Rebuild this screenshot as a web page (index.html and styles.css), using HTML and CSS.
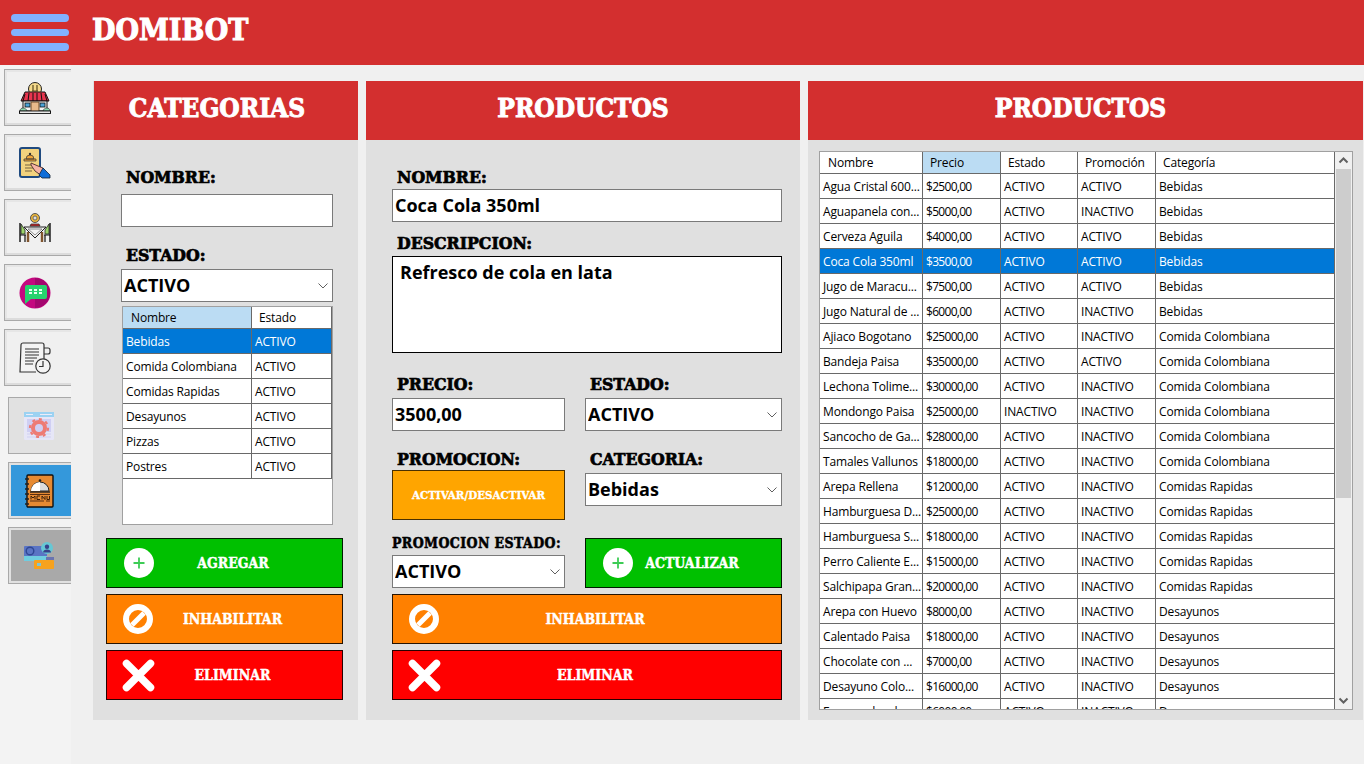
FILE: index.html
```html
<!DOCTYPE html>
<html lang="es">

<head>
    <meta charset="UTF-8">
    <meta name="viewport" content="width=device-width, initial-scale=1.0">
    <title>Domibot</title>
    <link rel="stylesheet" href="styles.css">
</head>

<body>
    <header class="topbar">
        <button class="menu-toggle" aria-label="Menu"><span></span><span></span><span></span></button>
        <div class="brand">DOMIBOT</div>
    </header>

    <div class="layout">
        <nav class="sidebar">
            <button class="nav-button">
                <svg class="nav-icon" viewBox="0 0 32 32">
                    <circle cx="16" cy="7" r="6.5" fill="#f3d98b" stroke="#222" stroke-width="1"/>
                    <path d="M14 3v6M18 3v6M13 9h6" stroke="#5a4a20" stroke-width="1.2" fill="none"/>
                    <path d="M6 10h20l4 9H2z" fill="#e8344e" stroke="#111" stroke-width="1"/>
                    <path d="M6 12l-2 7M10 11l-1 8M14 11v8M18 11v8M22 11l1 8M26 12l2 7" stroke="#111" stroke-width="1"/>
                    <rect x="4" y="19" width="24" height="10" fill="#f4f4f4" stroke="#111"/>
                    <rect x="6" y="21" width="5" height="4" fill="#4aa3d8" stroke="#111" stroke-width=".8"/>
                    <rect x="21" y="21" width="5" height="4" fill="#4aa3d8" stroke="#111" stroke-width=".8"/>
                    <rect x="12" y="20" width="8" height="10" fill="#e8b98a" stroke="#6b4a2a"/>
                    <path d="M1 29c0-4 6-4 7 0zM24 29c1-4 7-4 7 0z" fill="#8fd8b0" stroke="#222" stroke-width=".6"/>
                    <rect x="0.5" y="29" width="31" height="2.4" fill="#fff" stroke="#111"/>
                </svg>
            </button>
            <button class="nav-button">
                <svg class="nav-icon" viewBox="0 0 32 32">
                    <rect x="1" y="1" width="20" height="29" rx="2" fill="#f2d27e" stroke="#1f4a80" stroke-width="2"/>
                    <path d="M7 12a4 4 0 0 1 8 0zM5 12h12v2H5z" fill="#f0a53a" stroke="#333" stroke-width=".7"/>
                    <circle cx="11" cy="7" r="1.2" fill="#333"/>
                    <path d="M6 18h9M6 21h8M6 24h7" stroke="#b39a5e" stroke-width="2"/>
                    <path d="M12 16l7 3 5 2 3 5-4 3-7-5-4-6z" fill="#f7b3a5" stroke="#4a2c2c" stroke-width=".9"/>
                    <path d="M24 21l7 7v3h-8l-3-3z" fill="#0f6dd8" stroke="#123" stroke-width=".8"/>
                </svg>
            </button>
            <button class="nav-button">
                <svg class="nav-icon" viewBox="0 0 32 32">
                    <circle cx="16" cy="6" r="4.5" fill="#eab53c" stroke="#555" stroke-width="1"/>
                    <circle cx="16" cy="6" r="2" fill="#ddd" stroke="#555" stroke-width=".8"/>
                    <path d="M12 12h8l1 2H11z" fill="#d22b2b" stroke="#222" stroke-width=".7"/>
                    <path d="M1 11v19M31 11v19" stroke="#111" stroke-width="1.4"/>
                    <path d="M2 12l4 6v4H2zM30 12l-4 6v4h4z" fill="#9bd46a" stroke="#222" stroke-width=".8"/>
                    <path d="M1 23h6M25 23h6M6 23v7M26 23v7" stroke="#111" stroke-width="1.2"/>
                    <path d="M5 15h22l-11 11z" fill="#f3f3f3" stroke="#222" stroke-width="1"/>
                    <path d="M9 17h14l-7 6z" fill="none" stroke="#777" stroke-width=".8"/>
                    <path d="M9 20v10M23 20v10" stroke="#80552e" stroke-width="2.4"/>
                </svg>
            </button>
            <button class="nav-button">
                <svg class="nav-icon" viewBox="0 0 32 32">
                    <circle cx="16" cy="16" r="15.5" fill="#c4087f"/>
                    <path d="M16 1a15 15 0 0 1 0 30" fill="#a3076e"/>
                    <path d="M8 8h18a2 2 0 0 1 2 2v10a2 2 0 0 1-2 2H12l-6 5V10a2 2 0 0 1 2-2z" fill="#26d36e"/>
                    <path d="M10 13h3M15 13h3M20 13h3M10 16h3M15 16h3M20 16h3" stroke="#e6fff0" stroke-width="2"/>
                </svg>
            </button>
            <button class="nav-button">
                <svg class="nav-icon" viewBox="0 0 32 32">
                    <path d="M4 1h19a2 2 0 0 1 2 2v16M4 1a2 2 0 0 0-2 2l-1 27h16" fill="#f4f4f4" stroke="#333" stroke-width="1.2"/>
                    <path d="M25 6h4a2 2 0 0 1 2 2v2a2 2 0 0 1-2 2h-4" fill="none" stroke="#333" stroke-width="1.2"/>
                    <path d="M6 7h14M6 10h14M6 13h14M6 16h12M6 19h9M6 22h8" stroke="#333" stroke-width="1.1"/>
                    <circle cx="24" cy="24" r="7.2" fill="#f4f4f4" stroke="#333" stroke-width="1.2"/>
                    <path d="M24 19v5.5h-4" fill="none" stroke="#333" stroke-width="1.2"/>
                </svg>
            </button>

            <button class="nav-button nav-button-sub nav-button-first nav-button-off">
                <svg class="nav-icon nav-icon-sub" viewBox="0 0 30 28">
                    <rect width="30" height="28" rx="1.5" fill="#e8e8fb"/>
                    <rect width="30" height="5" fill="#8fd0f5"/>
                    <path d="M2 2.5h7M16 2.5h12" stroke="#eef" stroke-width="1.2"/>
                    <rect x="3" y="7" width="24" height="13" fill="#ccccf7"/>
                    <path d="M3 22h24M3 25h24" stroke="#d5d5f7" stroke-width="1.4"/>
                    <circle cx="15" cy="16" r="6" fill="none" stroke="#f06a62" stroke-width="4"/>
                    <circle cx="15" cy="16" r="9" fill="none" stroke="#f06a62" stroke-width="2.2" stroke-dasharray="3 4"/>
                </svg>
            </button>
            <button class="nav-button nav-button-sub nav-button-active">
                <svg class="nav-icon nav-icon-sub" viewBox="0 0 30 34">
                    <rect x="3" y="1" width="26" height="32" rx="1" fill="#e68a32" stroke="#111" stroke-width="1.4"/>
                    <path d="M1 5h4M1 10h4M1 15h4M1 20h4M1 25h4M1 30h4" stroke="#222" stroke-width="1.6"/>
                    <path d="M7 17a9 9 0 0 1 18 0z" fill="#dcdcdc" stroke="#222"/>
                    <path d="M7 17a9 9 0 0 1 9-9v9z" fill="#fff"/>
                    <path d="M6 18h20" stroke="#222" stroke-width="1.4"/>
                    <circle cx="16" cy="6.5" r="1.3" fill="#222"/>
                    <path d="M6 20.5h20M6 27h14M22 27h4" stroke="#5a2f10" stroke-width="1.2"/>
                    <path d="M7 25.5v-3.5l2 2 2-2v3.5M13 22h3M13 25.500h3M13 22v3.500M18 25.500V22l3 3.500V22M23 22v3.500h2.500V22" fill="none" stroke="#3d2008" stroke-width="1"/>
                </svg>
            </button>
            <button class="nav-button nav-button-sub nav-button-dim">
                <svg class="nav-icon nav-icon-sub" viewBox="0 0 30 26">
                    <rect x="0" y="3" width="23" height="15" rx="1" fill="#5a74c4"/>
                    <rect x="0" y="13" width="23" height="5" fill="#6fcde0"/>
                    <circle cx="6" cy="8" r="3.8" fill="none" stroke="#2f4794" stroke-width="1.4"/>
                    <rect x="10" y="17" width="20" height="9" rx="1" fill="#f6a21e"/>
                    <rect x="22" y="14" width="8" height="3" fill="#6a74b0"/>
                    <rect x="13" y="20" width="4" height="3" fill="#7cc6d8"/>
                    <circle cx="23" cy="5" r="6" fill="#66c7d4"/>
                    <circle cx="23" cy="3.8" r="2.2" fill="#37418a"/>
                    <path d="M19 9.500c0-4 8-4 8 0z" fill="#37418a"/>
                </svg>
            </button>
        </nav>

        <main class="content">
            <section class="panel panel-categorias">
                <h2 class="panel-title">CATEGORIAS</h2>
                <div class="form-narrow">
                    <label class="field-label field-first">NOMBRE:</label>
                    <input class="field field-name" type="text">
                    <label class="field-label field-estado">ESTADO:</label>
                    <select class="field field-select">
                        <option>ACTIVO</option>
                    </select>
                    <div class="grid-box grid-box-small">
                        <table class="grid grid-categorias">
                            <colgroup>
                                <col class="col-cat-name">
                                <col class="col-cat-state">
                            </colgroup>
                            <thead>
                                <tr>
                                    <th class="sorted">Nombre</th>
                                    <th>Estado</th>
                                </tr>
                            </thead>
                            <tbody>
                                <tr class="selected"><td>Bebidas</td><td>ACTIVO</td></tr>
                                <tr><td>Comida Colombiana</td><td>ACTIVO</td></tr>
                                <tr><td>Comidas Rapidas</td><td>ACTIVO</td></tr>
                                <tr><td>Desayunos</td><td>ACTIVO</td></tr>
                                <tr><td>Pizzas</td><td>ACTIVO</td></tr>
                                <tr><td>Postres</td><td>ACTIVO</td></tr>
                            </tbody>
                        </table>
                    </div>
                </div>
                <div class="actions actions-narrow">
                    <button class="action action-green">
                        <svg class="action-icon" viewBox="0 0 30 30"><circle cx="15" cy="15" r="15" fill="#fff"/><path d="M15 9.500v11M9.500 15h11" stroke="#3dcc55" stroke-width="1.800"/></svg>
                        <span class="action-text">AGREGAR</span>
                    </button>
                    <button class="action action-orange">
                        <svg class="action-icon" viewBox="0 0 30 30"><circle cx="15" cy="15" r="12" fill="none" stroke="#fff" stroke-width="6"/><path d="M9 21L21 9" stroke="#fff" stroke-width="5"/></svg>
                        <span class="action-text">INHABILITAR</span>
                    </button>
                    <button class="action action-red">
                        <svg class="action-icon" viewBox="0 0 30 30"><path d="M3.500 3.500l24 24M27.500 3.500l-24 24" stroke="#fff" stroke-width="7.500" stroke-linecap="round"/></svg>
                        <span class="action-text">ELIMINAR</span>
                    </button>
                </div>
            </section>

            <section class="panel panel-form">
                <h2 class="panel-title">PRODUCTOS</h2>
                <div class="form-wide">
                    <label class="field-label field-first">NOMBRE:</label>
                    <input class="field field-product" type="text" value="Coca Cola 350ml">
                    <label class="field-label field-desc">DESCRIPCION:</label>
                    <textarea class="field field-area">Refresco de cola en lata</textarea>

                    <div class="form-row form-row-price">
                        <div class="form-cell">
                            <label class="field-label">PRECIO:</label>
                            <input class="field" type="text" value="3500,00">
                        </div>
                        <div class="form-cell">
                            <label class="field-label">ESTADO:</label>
                            <select class="field field-select"><option>ACTIVO</option></select>
                        </div>
                    </div>

                    <div class="form-row form-row-promo">
                        <div class="form-cell form-cell-tight">
                            <label class="field-label">PROMOCION:</label>
                            <button class="promo-button">ACTIVAR/DESACTIVAR</button>
                        </div>
                        <div class="form-cell">
                            <label class="field-label">CATEGORIA:</label>
                            <select class="field field-select"><option>Bebidas</option></select>
                        </div>
                    </div>

                    <div class="form-row form-row-state">
                        <div class="form-cell form-cell-small">
                            <label class="field-label field-label-small">PROMOCION ESTADO:</label>
                            <select class="field field-select"><option>ACTIVO</option></select>
                        </div>
                        <button class="action action-green action-update">
                            <svg class="action-icon" viewBox="0 0 30 30"><circle cx="15" cy="15" r="15" fill="#fff"/><path d="M15 9.500v11M9.500 15h11" stroke="#3dcc55" stroke-width="1.800"/></svg>
                            <span class="action-text">ACTUALIZAR</span>
                        </button>
                    </div>

                    <div class="actions">
                        <button class="action action-orange">
                            <svg class="action-icon" viewBox="0 0 30 30"><circle cx="15" cy="15" r="12" fill="none" stroke="#fff" stroke-width="6"/><path d="M9 21L21 9" stroke="#fff" stroke-width="5"/></svg>
                            <span class="action-text">INHABILITAR</span>
                        </button>
                        <button class="action action-red">
                            <svg class="action-icon" viewBox="0 0 30 30"><path d="M3.500 3.500l24 24M27.500 3.500l-24 24" stroke="#fff" stroke-width="7.500" stroke-linecap="round"/></svg>
                            <span class="action-text">ELIMINAR</span>
                        </button>
                    </div>
                </div>
            </section>

            <section class="panel panel-list">
                <h2 class="panel-title">PRODUCTOS</h2>
                <div class="grid-box grid-box-large">
                    <div class="grid-scroll">
                        <table class="grid grid-productos">
                            <colgroup>
                                <col class="col-name">
                                <col class="col-price">
                                <col class="col-state">
                                <col class="col-promo">
                                <col class="col-category">
                            </colgroup>
                            <thead>
                                <tr>
                                    <th>Nombre</th>
                                    <th class="sorted">Precio</th>
                                    <th>Estado</th>
                                    <th>Promoción</th>
                                    <th>Categoría</th>
                                </tr>
                            </thead>
                            <tbody>
                                <tr><td>Agua Cristal 600...</td><td>$2500,00</td><td>ACTIVO</td><td>ACTIVO</td><td>Bebidas</td></tr>
                                <tr><td>Aguapanela con...</td><td>$5000,00</td><td>ACTIVO</td><td>INACTIVO</td><td>Bebidas</td></tr>
                                <tr><td>Cerveza Aguila</td><td>$4000,00</td><td>ACTIVO</td><td>ACTIVO</td><td>Bebidas</td></tr>
                                <tr class="selected"><td>Coca Cola 350ml</td><td>$3500,00</td><td>ACTIVO</td><td>ACTIVO</td><td>Bebidas</td></tr>
                                <tr><td>Jugo de Maracu...</td><td>$7500,00</td><td>ACTIVO</td><td>ACTIVO</td><td>Bebidas</td></tr>
                                <tr><td>Jugo Natural de ...</td><td>$6000,00</td><td>ACTIVO</td><td>INACTIVO</td><td>Bebidas</td></tr>
                                <tr><td>Ajiaco Bogotano</td><td>$25000,00</td><td>ACTIVO</td><td>INACTIVO</td><td>Comida Colombiana</td></tr>
                                <tr><td>Bandeja Paisa</td><td>$35000,00</td><td>ACTIVO</td><td>ACTIVO</td><td>Comida Colombiana</td></tr>
                                <tr><td>Lechona Tolime...</td><td>$30000,00</td><td>ACTIVO</td><td>INACTIVO</td><td>Comida Colombiana</td></tr>
                                <tr><td>Mondongo Paisa</td><td>$25000,00</td><td>INACTIVO</td><td>INACTIVO</td><td>Comida Colombiana</td></tr>
                                <tr><td>Sancocho de Ga...</td><td>$28000,00</td><td>ACTIVO</td><td>INACTIVO</td><td>Comida Colombiana</td></tr>
                                <tr><td>Tamales Vallunos</td><td>$18000,00</td><td>ACTIVO</td><td>INACTIVO</td><td>Comida Colombiana</td></tr>
                                <tr><td>Arepa Rellena</td><td>$12000,00</td><td>ACTIVO</td><td>INACTIVO</td><td>Comidas Rapidas</td></tr>
                                <tr><td>Hamburguesa D...</td><td>$25000,00</td><td>ACTIVO</td><td>INACTIVO</td><td>Comidas Rapidas</td></tr>
                                <tr><td>Hamburguesa S...</td><td>$18000,00</td><td>ACTIVO</td><td>INACTIVO</td><td>Comidas Rapidas</td></tr>
                                <tr><td>Perro Caliente E...</td><td>$15000,00</td><td>ACTIVO</td><td>INACTIVO</td><td>Comidas Rapidas</td></tr>
                                <tr><td>Salchipapa Gran...</td><td>$20000,00</td><td>ACTIVO</td><td>INACTIVO</td><td>Comidas Rapidas</td></tr>
                                <tr><td>Arepa con Huevo</td><td>$8000,00</td><td>ACTIVO</td><td>INACTIVO</td><td>Desayunos</td></tr>
                                <tr><td>Calentado Paisa</td><td>$18000,00</td><td>ACTIVO</td><td>INACTIVO</td><td>Desayunos</td></tr>
                                <tr><td>Chocolate con ...</td><td>$7000,00</td><td>ACTIVO</td><td>INACTIVO</td><td>Desayunos</td></tr>
                                <tr><td>Desayuno Colo...</td><td>$16000,00</td><td>ACTIVO</td><td>INACTIVO</td><td>Desayunos</td></tr>
                                <tr><td>Empanadas de ...</td><td>$6000,00</td><td>ACTIVO</td><td>INACTIVO</td><td>Desayunos</td></tr>
                            </tbody>
                        </table>
                    </div>
                    <div class="scrollbar">
                        <svg class="scroll-arrow" viewBox="0 0 17 17"><path d="M4.500 10.500l4-4 4 4" fill="none" stroke="#606060" stroke-width="2"/></svg>
                        <div class="scroll-track"><div class="scroll-thumb"></div></div>
                        <svg class="scroll-arrow" viewBox="0 0 17 17"><path d="M4.500 6.500l4 4 4-4" fill="none" stroke="#606060" stroke-width="2"/></svg>
                    </div>
                </div>
            </section>
        </main>
    </div>
</body>

</html>
```

FILE: styles.css
```css
* {
    box-sizing: border-box;
}

html,
body {
    margin: 0;
    height: 100%;
    overflow: hidden;
}

body {
    background-color: #f0f0f0;
    font-family: "Open Sans", "Noto Sans", sans-serif;
    color: #000;
}

button {
    font-family: inherit;
    padding: 0;
    cursor: pointer;
}

/* top bar */
.topbar {
    display: flex;
    align-items: center;
    height: 65px;
    background-color: #d32f2f;
}

.menu-toggle {
    display: flex;
    flex-direction: column;
    gap: 7px;
    width: 58px;
    margin-left: 11px;
    margin-right: 23px;
    margin-top: 0;
    background: none;
    border: none;
}

.menu-toggle span {
    display: block;
    height: 7.5px;
    border-radius: 4px;
    background-color: #82b1ff;
}

.brand {
    margin-top: -6px;
    font-family: "DejaVu Serif", serif;
    font-stretch: condensed;
    font-weight: bold;
    font-size: 30px;
    color: #fff;
    -webkit-text-stroke: 1px #fff;
}

.layout {
    display: flex;
    height: 699px;
}

/* sidebar */
.sidebar {
    display: flex;
    flex-direction: column;
    gap: 8px;
    flex: 0 0 71px;
    padding: 4px 0 0 4px;
    background-color: #f3f3f3;
    overflow: hidden;
}

.nav-button {
    display: flex;
    align-items: center;
    flex: 0 0 57px;
    width: 80px;
    padding-left: 14px;
    background-color: #f0f0f0;
    border: 1px solid #a9a9a9;
    box-shadow: inset -2px -2px 0 #dcdcdc, inset 2px 2px 0 #e6e6e6;
}

.nav-icon {
    width: 32px;
    height: 32px;
}

.nav-button-sub {
    margin-left: 4px;
    padding-left: 15px;
    border-width: 1px;
    box-shadow: none;
}

.nav-button-first {
    margin-top: 3px;
}

.nav-button-off {
    background-color: #e1e1e1;
}

.nav-icon-sub {
    width: 30px;
    height: 28px;
}

.nav-button-off .nav-icon {
    opacity: 0.85;
}

.nav-button-active {
    background-color: #3498db;
    border: 1px solid #a9a9a9;
    box-shadow: inset 0 0 0 2px #e1e1e1;
}

.nav-button-active .nav-icon {
    width: 30px;
    height: 34px;
}

.nav-button-dim {
    background-color: #a9a9a9;
    box-shadow: inset 0 0 0 2px #e1e1e1;
}

/* panels */
.content {
    display: flex;
    gap: 8px;
    padding: 16px 1px 0 22px;
    flex: 1;
}

.panel {
    height: 639px;
    background-color: #e0e0e0;
}

.panel-categorias {
    flex: 0 0 265px;
}

.panel-form {
    flex: 0 0 434px;
}

.panel-list {
    flex: 1;
}

.panel-title {
    height: 59px;
    margin: 0;
    line-height: 54px;
    text-align: center;
    font-family: "DejaVu Serif", serif;
    font-stretch: condensed;
    font-weight: bold;
    font-size: 26px;
    color: #fff;
    background-color: #d32f2f;
    -webkit-text-stroke: 0.9px #fff;
}

.panel-categorias .panel-title {
    margin-left: 1px;
    padding-right: 18px;
}

.panel-list .panel-title {
    padding-right: 10px;
}

/* form */
.form-narrow {
    width: 212px;
    margin-left: 28px;
}

.form-wide {
    width: 390px;
    margin-left: 26px;
}

.field-label {
    display: block;
    height: 20px;
    padding-left: 5px;
    line-height: 22px;
    font-family: "DejaVu Serif", serif;
    font-stretch: condensed;
    font-weight: bold;
    font-size: 17.5px;
    -webkit-text-stroke: 0.7px #000;
    white-space: nowrap;
}

.field-first {
    margin-top: 26px;
}

.field-name {
    margin-top: 8px;
}

.field-estado {
    margin-top: 17px;
    margin-bottom: 5px;
}

.field-product {
    margin-top: 3px;
}

.field-desc {
    margin-top: 10px;
    margin-bottom: 4px;
}

.field {
    display: block;
    width: 100%;
    height: 33px;
    padding: 0 2px 2px;
    border: 1px solid #7a7a7a;
    border-radius: 0;
    background-color: #fff;
    font-family: inherit;
    font-weight: bold;
    font-size: 18px;
    color: #000;
    outline: none;
}

.field-select {
    appearance: none;
    background-image: url("data:image/svg+xml,%3Csvg xmlns='http://www.w3.org/2000/svg' width='10' height='6'%3E%3Cpath d='M.5.5l4.500 4.500 4.500-4.500' fill='none' stroke='%23606060'/%3E%3C/svg%3E");
    background-repeat: no-repeat;
    background-position: right 4px center;
}

.field-area {
    height: 97px;
    padding: 3px 7px;
    border-color: #000;
    resize: none;
}

.form-row {
    display: grid;
    grid-template-columns: 173px 197px;
    column-gap: 20px;
}

.form-row-price {
    margin-top: 20px;
}

.form-row-promo {
    margin-top: 17px;
}

.form-row-state {
    margin-top: 13px;
}

.form-cell .field-label {
    margin-bottom: 5px;
}

.form-cell-tight .field-label {
    margin-bottom: 2px;
}

.form-cell-small .field-label {
    margin-bottom: 2px;
    padding-left: 0;
}

.form-cell .field-label-small {
    line-height: 20px;
    font-size: 14px;
    letter-spacing: 0.4px;
    -webkit-text-stroke: 0.5px #000;
}

.promo-button {
    display: block;
    width: 100%;
    height: 50px;
    background-color: #ffa500;
    border: 1px solid #4a3000;
    font-family: "DejaVu Serif", serif;
    font-stretch: condensed;
    font-weight: bold;
    font-size: 11.5px;
    color: #fff;
    -webkit-text-stroke: 0.3px #fff;
}

/* action buttons */
.actions {
    display: flex;
    flex-direction: column;
    gap: 6px;
    margin-top: 6px;
}

.actions-narrow {
    width: 237px;
    margin-top: 13px;
    margin-left: 13px;
}

.action {
    display: flex;
    align-items: center;
    width: 100%;
    height: 50px;
    padding: 0 30px 0 17px;
    border: 1px solid rgba(0, 0, 0, 0.85);
}

.action-orange,
.action-red {
    padding-left: 16px;
}

.action-icon {
    flex: 0 0 30px;
    width: 30px;
    height: 30px;
    overflow: visible;
}

.action-text {
    flex: 1;
    text-align: center;
    font-family: "DejaVu Serif", serif;
    font-stretch: condensed;
    font-weight: bold;
    font-size: 14px;
    color: #fff;
    -webkit-text-stroke: 0.4px #fff;
}

.action-green {
    background-color: #00c000;
}

.action-orange {
    background-color: #ff8000;
}

.action-red {
    background-color: #ff0000;
}

.action-update {
    margin-top: 5px;
}

/* data grids */
.grid-box {
    background-color: #fff;
    border: 1px solid #a0a0a0;
}

.grid-box-small {
    height: 219px;
    margin-top: 4px;
    width: 211px;
    margin-left: 1px;
}

.grid-box-large {
    display: flex;
    width: 534px;
    height: 559px;
    margin: 11px 0 0 11px;
}

.grid-scroll {
    flex: 1;
    overflow: hidden;
}

.grid {
    width: 100%;
    border-collapse: separate;
    border-spacing: 0;
    table-layout: fixed;
    font-size: 12px;
    letter-spacing: -0.15px;
}

.grid th,
.grid td {
    overflow: hidden;
    padding: 0 0 0 3px;
    border-right: 1px solid #696969;
    border-bottom: 1px solid #696969;
    white-space: nowrap;
    font-weight: normal;
    text-align: left;
}

.grid td {
    height: 25px;
}

.grid th {
    height: 22px;
    padding-left: 8px;
}

.grid th + th {
    padding-left: 7px;
}

.grid-productos td:nth-child(2) {
    letter-spacing: -0.7px;
}

.grid th.sorted {
    background-color: #bbdcf3;
}

.grid tr.selected td {
    background-color: #0078d7;
    color: #fff;
}

.col-cat-name {
    width: 129px;
}

.col-cat-state {
    width: 80px;
}

.col-name {
    width: 103px;
}

.col-price {
    width: 78px;
}

.col-state {
    width: 77px;
}

.col-promo {
    width: 78px;
}

/* scrollbar */
.scrollbar {
    display: flex;
    flex-direction: column;
    flex: 0 0 17px;
    background-color: #f0f0f0;
}

.scroll-arrow {
    flex: 0 0 17px;
    height: 17px;
}

.scroll-track {
    flex: 1;
    padding: 0 1px;
}

.scroll-thumb {
    height: 329px;
    background-color: #cdcdcd;
}
```
